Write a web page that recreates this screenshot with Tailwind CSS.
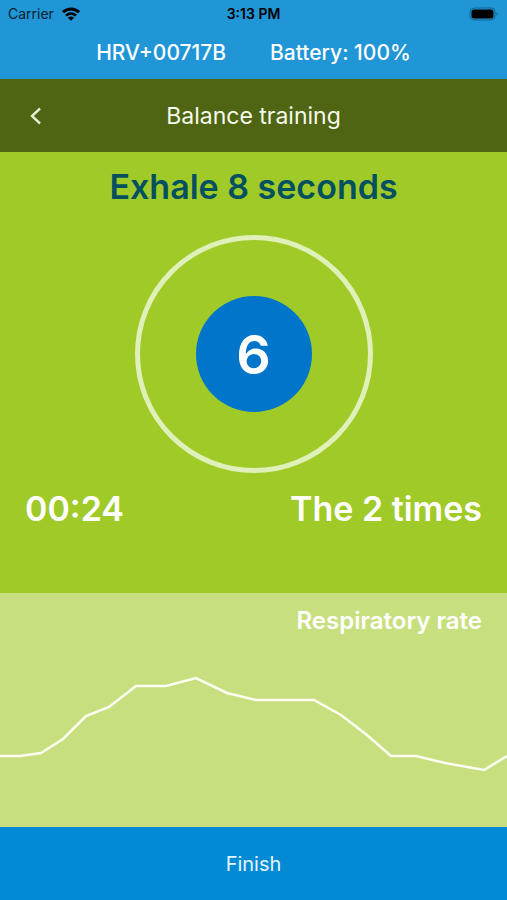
<!DOCTYPE html>
<html lang="en">
<head>
  <meta charset="UTF-8" />
  <meta name="viewport" content="width=device-width, initial-scale=1" />
  <title>Balance training</title>
  <script src="https://cdn.jsdelivr.net/npm/@tailwindcss/browser@4"></script>
  <style>
    body { font-family: Inter, 'Liberation Sans', sans-serif; }
  </style>
</head>
<body class="min-h-screen flex flex-col bg-[#9fca28] text-white">
  <!-- Status bar + device info -->
  <header class="bg-[#2196d6]">
    <div class="grid grid-cols-3 items-center h-7 px-2 text-sm text-[#04202f]">
      <div class="flex items-center gap-2">
        <span>Carrier</span>
        <svg class="w-[18px] h-[14px]" viewBox="0 0 18 14" fill="none" stroke="#000" stroke-width="3">
          <path d="M1 5.2C5.6 .8 12.400 .8 17 5.200" />
          <path d="M4 8.600C6.900 5.900 11.100 5.900 14 8.600" stroke-width="2.600" />
          <path d="M9 13.800L5.900 10.700C7.700 9.200 10.300 9.200 12.100 10.700Z" fill="#000" stroke="none" />
        </svg>
      </div>
      <span class="text-center font-semibold text-black">3:13 PM</span>
      <svg class="justify-self-end w-[30px] h-[14px]" viewBox="0 0 30 14">
        <rect x="1" y="1" width="25" height="12" rx="4" fill="none" stroke="#126491" />
        <rect x="2.500" y="2.500" width="22" height="9" rx="2.500" fill="#000" />
        <path d="M27.500 5v4c1.700-.6 1.700-3.400 0-4z" fill="#126491" />
      </svg>
    </div>
    <div class="flex justify-center gap-11 pt-[11px] pb-3 text-[21px] leading-7 font-medium">
      <span>HRV+00717B</span>
      <span>Battery: 100%</span>
    </div>
  </header>

  <!-- Title bar -->
  <nav class="grid grid-cols-[72px_1fr_72px] items-center h-[73px] bg-[#4f6514]">
    <button class="flex justify-center" aria-label="Back">
      <svg class="w-3 h-[18px]" viewBox="0 0 12 18" fill="none" stroke="#e6eed2" stroke-width="2.400">
        <path d="M10 1.500L2 9l8 7.500" />
      </svg>
    </button>
    <h1 class="text-center text-[23px] leading-8 text-[#f6faea]">Balance training</h1>
  </nav>

  <!-- Breathing guide -->
  <main class="flex flex-col pt-[13px] pb-[62px]">
    <h2 class="text-center text-[34px] leading-11 font-semibold text-[#04505f]">Exhale 8 seconds</h2>
    <div class="self-center mt-[26px] flex items-center justify-center size-[238px] rounded-full border-[5px] border-[#dff0b8]">
      <div class="flex items-center justify-center size-[116px] rounded-full bg-[#0075c9] text-[54px] font-semibold">6</div>
    </div>
    <div class="flex justify-between mt-3.5 px-[25px] text-[34px] leading-11 font-semibold">
      <span>00:24</span>
      <span>The 2 times</span>
    </div>
  </main>

  <!-- Respiratory rate chart -->
  <section class="flex-1 flex flex-col bg-[#c7df7f]">
    <h3 class="pt-3 pr-[25px] text-right text-2xl leading-8 font-semibold">Respiratory rate</h3>
    <svg class="w-full h-[190px]" viewBox="0 637 507 190" preserveAspectRatio="none" fill="none" stroke="#fdfff2" stroke-width="2.500">
      <polyline points="0,756 20,756 41,753 63,739 86,716 109,707 136,686 166,686 196,678 227,693 256,700 314,700 341,715 367,735 391,756 416,756 445,763 484,770 507,756" />
    </svg>
  </section>

  <button class="shrink-0 h-[73px] bg-[#028ad5] text-xl text-[#e4f5ff]">Finish</button>
</body>
</html>
